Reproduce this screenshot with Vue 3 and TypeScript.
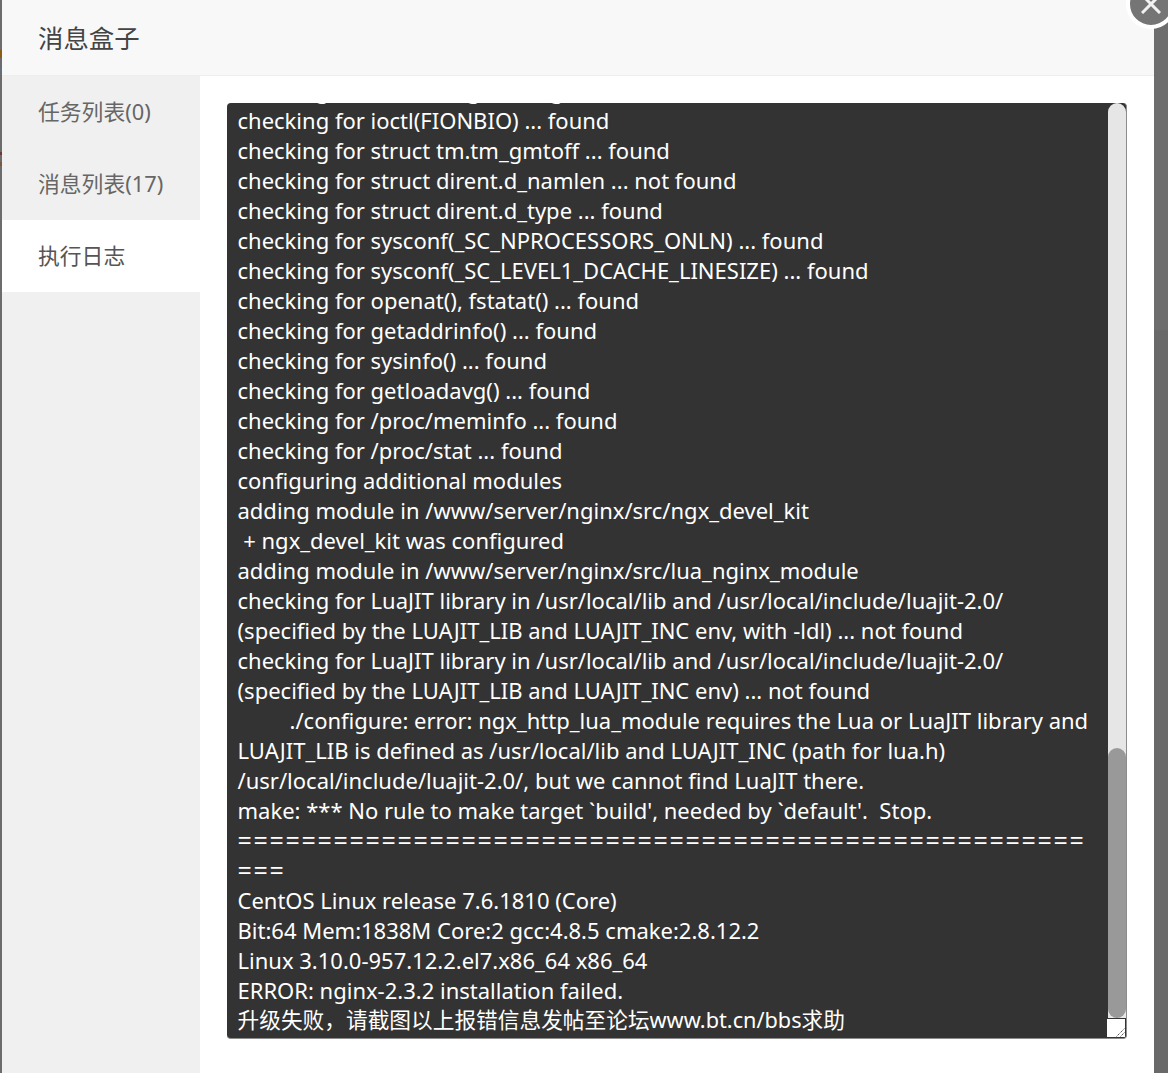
<script setup lang="ts">
const tabs = [
  { label: '任务列表(0)', active: false },
  { label: '消息列表(17)', active: false },
  { label: '执行日志', active: true },
]
const lines: string[] = [
  'checking for struct msghdr.msg_control ... found',
  'checking for ioctl(FIONBIO) ... found',
  'checking for struct tm.tm_gmtoff ... found',
  'checking for struct dirent.d_namlen ... not found',
  'checking for struct dirent.d_type ... found',
  'checking for sysconf(_SC_NPROCESSORS_ONLN) ... found',
  'checking for sysconf(_SC_LEVEL1_DCACHE_LINESIZE) ... found',
  'checking for openat(), fstatat() ... found',
  'checking for getaddrinfo() ... found',
  'checking for sysinfo() ... found',
  'checking for getloadavg() ... found',
  'checking for /proc/meminfo ... found',
  'checking for /proc/stat ... found',
  'configuring additional modules',
  'adding module in /www/server/nginx/src/ngx_devel_kit',
  ' + ngx_devel_kit was configured',
  'adding module in /www/server/nginx/src/lua_nginx_module',
  'checking for LuaJIT library in /usr/local/lib and /usr/local/include/luajit-2.0/',
  '(specified by the LUAJIT_LIB and LUAJIT_INC env, with -ldl) ... not found',
  'checking for LuaJIT library in /usr/local/lib and /usr/local/include/luajit-2.0/',
  '(specified by the LUAJIT_LIB and LUAJIT_INC env) ... not found',
  '\t./configure: error: ngx_http_lua_module requires the Lua or LuaJIT library and',
  'LUAJIT_LIB is defined as /usr/local/lib and LUAJIT_INC (path for lua.h)',
  '/usr/local/include/luajit-2.0/, but we cannot find LuaJIT there.',
  "make: *** No rule to make target `build', needed by `default'.  Stop.",
  '='.repeat(53),
  '===',
  'CentOS Linux release 7.6.1810 (Core)',
  'Bit:64 Mem:1838M Core:2 gcc:4.8.5 cmake:2.8.12.2',
  'Linux 3.10.0-957.12.2.el7.x86_64 x86_64',
  'ERROR: nginx-2.3.2 installation failed.',
  '升级失败\uFF0C请截图以上报错信息发帖至论坛www.bt.cn/bbs求助',
]
const isRule = (l: string): boolean => /^=+$/.test(l)
const isCjk = (l: string): boolean => /[\u4e00-\u9fff]/.test(l)
</script>

<template>
  <div class="page">
    <div class="edge"></div>
    <section class="modal">
      <header class="title">消息盒子</header>
      <div class="body">
        <nav class="side">
          <div v-for="t in tabs" :key="t.label" class="tab" :class="{ active: t.active }">{{ t.label }}</div>
        </nav>
        <main class="content">
          <div class="log">
            <div class="log-inner">
              <div v-for="(l, i) in lines" :key="i" class="line" :class="{ rule: isRule(l), cjk: isCjk(l) }">{{ l }}</div>
            </div>
            <div class="track"><div class="thumb"></div></div>
            <div class="corner">
              <svg width="18" height="18" viewBox="0 0 18 18">
                <path d="M9.5 17.5 17.5 9.5M13.5 17.5 17.5 13.5" stroke="#555" stroke-width="1" stroke-dasharray="1.4 .7" fill="none" />
              </svg>
            </div>
          </div>
        </main>
      </div>
    </section>
    <div class="backdrop"></div>
    <div class="close">
      <svg width="20" height="20" viewBox="0 0 20 20">
        <path d="M1 1 19 19M19 1 1 19" stroke="#f2f2f2" stroke-width="3" fill="none" />
      </svg>
    </div>
  </div>
</template>

<style scoped>
.page {
  position: relative;
  display: flex;
  width: 1168px;
  height: 1073px;
  overflow: hidden;
  font-family: "Noto Sans", "Noto Sans CJK SC", sans-serif;
}
.edge {
  width: 2px;
  flex: none;
  background: linear-gradient(#6c6c6c 0 50px, #8a5c14 50px 58px, #6c6c6c 58px 68px, #5f7186 68px 71px, #6c6c6c 71px 152px, #6d3a3a 152px 155px, #6c6c6c 155px 162px, #7a5a3a 162px 166px, #6c6c6c 166px);
}
.modal {
  width: 1152px;
  flex: none;
  display: flex;
  flex-direction: column;
  background: #fff;
}
.title {
  flex: none;
  box-sizing: border-box;
  height: 76px;
  padding-left: 36px;
  line-height: 76px;
  font-size: 25.4px;
  color: #444;
  background: #f8f8f8;
  border-bottom: 1px solid #eee;
}
.body {
  flex: 1;
  display: flex;
  min-height: 0;
}
.side {
  width: 198px;
  flex: none;
  background: #f0f0f0;
}
.tab {
  height: 72px;
  padding-left: 36px;
  line-height: 72px;
  font-size: 21.8px;
  color: #666;
}
.tab.active {
  background: #fff;
  color: #555;
}
.content {
  flex: 1;
  padding: 27px 27px 34px 27px;
  min-width: 0;
}
.log {
  position: relative;
  width: 900px;
  height: 936px;
  box-sizing: border-box;
  overflow: hidden;
  background: #333;
  border-radius: 4px;
  border-right: 1px solid #8c8c8c;
  border-bottom: 1px solid #8c8c8c;
}
.log-inner {
  margin-top: -28px;
  padding-left: 10.5px;
  font-size: 22px;
  line-height: 30px;
  color: #fff;
  white-space: pre;
  tab-size: 52px;
}
.line {
  height: 30px;
}
.rule {
  font-size: 25px;
  letter-spacing: 1.7px;
}
.cjk {
  font-size: 21.7px;
}
.track {
  position: absolute;
  top: 0;
  right: 0;
  width: 18px;
  bottom: 20px;
  background: #e6e6e6;
  border-radius: 9px 9px 0 0;
}
.thumb {
  position: absolute;
  left: 0;
  right: 0;
  bottom: 0;
  height: 270px;
  background: #999;
  border-radius: 9px;
}
.corner {
  position: absolute;
  right: 1px;
  bottom: 1px;
  width: 18px;
  height: 18px;
  background: #fff;
}
.corner svg {
  display: block;
}
.backdrop {
  flex: 1;
  background: linear-gradient(#6d6d6d 0 330px, #696969 330px);
}
.close {
  position: absolute;
  left: 1126px;
  top: -21px;
  width: 42px;
  height: 42px;
  box-sizing: content-box;
  border: 4px solid #fff;
  border-radius: 50%;
  background: #757575;
  display: flex;
  align-items: center;
  justify-content: center;
}
</style>
